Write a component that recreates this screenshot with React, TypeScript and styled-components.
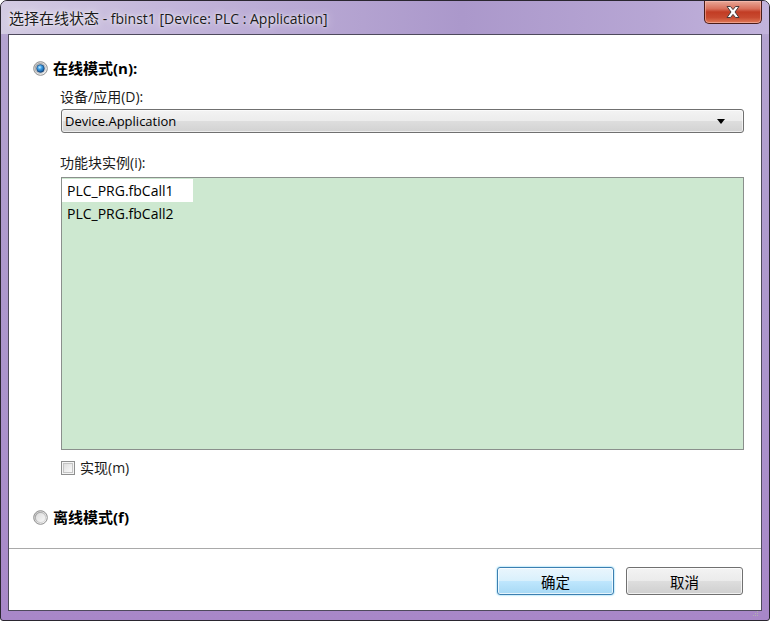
import React from "react";
import styled, { createGlobalStyle } from "styled-components";

const GlobalStyle = createGlobalStyle`
  html, body { margin: 0; padding: 0; background: #ffffff; }
  body { width: 770px; height: 621px; overflow: hidden; }
  * { box-sizing: border-box; }
`;

const UI_FONT = `"Segoe UI", "Open Sans", "Noto Sans CJK SC", sans-serif`;

const Window = styled.div`
  width: 770px;
  height: 621px;
  display: flex;
  flex-direction: column;
  border: 1px solid #2a2630;
  border-radius: 7px 7px 3px 3px;
  background: linear-gradient(180deg, #c7bbdc 0%, #b4a3d0 6%, #ab94cc 60%, #a887c8 100%);
  overflow: hidden;
  font-family: ${UI_FONT};
  color: #000;
`;

const TitleBar = styled.div`
  height: 33px;
  display: flex;
  align-items: flex-start;
  justify-content: space-between;
  padding-left: 8px;
  padding-right: 7px;
  background: linear-gradient(90deg, #d3cbe2 0%, #c4b7db 20%, #ab98cb 60%, #b7a6d4 85%, #c2b3dc 100%);
`;

const TitleText = styled.div`
  margin-top: 7px;
  font-size: 14px;
  line-height: 20px;
  color: #1a1a1a;
  white-space: nowrap;
  text-shadow: 0 0 8px rgba(255, 255, 255, 0.9), 0 0 3px rgba(255, 255, 255, 0.8);
`;

const TitleCjk = styled.span`
  font-size: 15px;
`;

const CloseButton = styled.div`
  width: 58px;
  height: 23px;
  border: 1px solid #4a1c18;
  border-top: none;
  border-radius: 0 0 5px 5px;
  background: linear-gradient(180deg, #e8a898 0%, #d8705c 35%, #c23c24 50%, #c84a30 75%, #e07a58 100%);
  box-shadow: inset 0 0 0 1px rgba(255, 200, 190, 0.5);
  display: flex;
  align-items: center;
  justify-content: center;
`;

const Client = styled.div`
  flex: 1;
  margin: 0 7px 9px 7px;
  border: 1px solid #4e4a5c;
  background: #ffffff;
  display: flex;
  flex-direction: column;
  position: relative;
`;

const Body = styled.div`
  display: flex;
  flex-direction: column;
  padding: 26px 17px 0 24px;
`;

const RadioRow = styled.div<{ $mt?: number }>`
  display: flex;
  align-items: center;
  height: 15px;
  margin-top: ${(p) => p.$mt ?? 0}px;
  gap: 5px;
`;

const RadioLabel = styled.span`
  font-size: 15px;
  font-weight: bold;
  line-height: 15px;
  color: #000;
`;

const Indented = styled.div`
  display: flex;
  flex-direction: column;
  margin-left: 28px;
`;

const FieldLabel = styled.div<{ $mt: number }>`
  font-size: 14px;
  line-height: 16px;
  height: 16px;
  margin-top: ${(p) => p.$mt}px;
  margin-left: -1px;
  color: #1a1a1a;
`;

const Combo = styled.div`
  margin-top: 4px;
  height: 24px;
  border: 1px solid #707070;
  border-radius: 3px;
  background: linear-gradient(180deg, #f3f3f3 0%, #ececec 48%, #dddddd 52%, #d2d2d2 100%);
  box-shadow: inset 0 0 0 1px rgba(255, 255, 255, 0.6);
  display: flex;
  align-items: center;
  justify-content: space-between;
  padding: 0 18px 0 3px;
  font-size: 13px;
  color: #000;
`;

const Arrow = styled.div`
  width: 0;
  height: 0;
  border-left: 4px solid transparent;
  border-right: 4px solid transparent;
  border-top: 5px solid #000;
`;

const List = styled.div`
  margin-top: 6px;
  height: 273px;
  border: 1px solid #8a8f8c;
  background: #cde8d0;
  display: flex;
  flex-direction: column;
  padding: 1px 0 0 0;
`;

const ListItem = styled.div<{ $selected?: boolean }>`
  width: 131px;
  height: 23px;
  line-height: 23px;
  padding-left: 5px;
  font-size: 14px;
  color: #000;
  white-space: nowrap;
  background: ${(p) => (p.$selected ? "#ffffff" : "transparent")};
`;

const CheckRow = styled.div`
  margin-top: 10px;
  display: flex;
  align-items: center;
  gap: 5px;
  height: 15px;
`;

const CheckBox = styled.div`
  width: 14px;
  height: 14px;
  border: 1px solid #8e8f8f;
  background: linear-gradient(135deg, #d6d6d6 0%, #f0f0f0 60%, #ffffff 100%);
  box-shadow: inset 0 0 0 1px #f4f4f4, inset 0 0 0 2px #c4c4c4;
`;

const CheckLabel = styled.span`
  font-size: 14px;
  line-height: 15px;
  color: #1a1a1a;
`;

const Footer = styled.div`
  margin-top: auto;
  height: 62px;
  border-top: 1px solid #a9a9a9;
  display: flex;
  justify-content: flex-end;
  align-items: flex-start;
  gap: 12px;
  padding: 18px 18px 0 0;
`;

const Button = styled.div<{ $primary?: boolean }>`
  width: 117px;
  height: 28px;
  border-radius: 3px;
  display: flex;
  align-items: center;
  justify-content: center;
  font-size: 14.5px;
  color: #000;
  border: 1px solid ${(p) => (p.$primary ? "#3c7fb1" : "#707070")};
  background: ${(p) =>
    p.$primary
      ? "linear-gradient(180deg, #eaf6fd 0%, #d9f0fc 48%, #bee6fd 52%, #a7d9f5 100%)"
      : "linear-gradient(180deg, #f3f3f3 0%, #ebebeb 48%, #dddddd 52%, #cfcfcf 100%)"};
  box-shadow: ${(p) =>
    p.$primary
      ? "inset 0 0 0 1px rgba(255,255,255,0.7), 0 0 2px #4cc0f0"
      : "inset 0 0 0 1px rgba(255,255,255,0.7)"};
`;

const Grip = styled.div`
  position: absolute;
  right: 2px;
  bottom: 2px;
  width: 8px;
  height: 8px;
`;

function Radio({ checked, id }: { checked: boolean; id: string }) {
  return (
    <svg width="15" height="15" viewBox="0 0 15 15">
      <defs>
        <linearGradient id={`ring-${id}`} x1="0" y1="0" x2="1" y2="1">
          <stop offset="0" stopColor="#9a9a9a" />
          <stop offset="1" stopColor="#e8e8e8" />
        </linearGradient>
        <linearGradient id={`in-${id}`} x1="0" y1="0" x2="1" y2="1">
          <stop offset="0" stopColor="#d4d4d4" />
          <stop offset="1" stopColor="#ffffff" />
        </linearGradient>
        <radialGradient id={`dot-${id}`} cx="0.4" cy="0.35" r="0.75">
          <stop offset="0" stopColor="#c8ecff" />
          <stop offset="0.35" stopColor="#3fa0e6" />
          <stop offset="0.8" stopColor="#145a9e" />
          <stop offset="1" stopColor="#0c3868" />
        </radialGradient>
      </defs>
      <circle cx="7.5" cy="7.5" r="6.8" fill={`url(#in-${id})`} stroke="#8c8c8c" strokeWidth="1" />
      <circle cx="7.5" cy="7.5" r="5.2" fill="none" stroke={`url(#ring-${id})`} strokeWidth="1.2" />
      {checked && <circle cx="7.5" cy="7.5" r="3.9" fill={`url(#dot-${id})`} stroke="#1e3e66" strokeWidth="0.6" />}
    </svg>
  );
}

export default function App() {
  return (
    <>
      <GlobalStyle />
      <Window>
        <TitleBar>
          <TitleText>
            <TitleCjk>选择在线状态</TitleCjk> - fbinst1 [Device: PLC : Application]
          </TitleText>
          <CloseButton>
            <svg width="18" height="14" viewBox="0 0 18 14">
              <path
                d="M3 1.5 L6.5 1.5 L9 4.6 L11.5 1.5 L15 1.5 L11 7 L15 12.5 L11.5 12.5 L9 9.4 L6.5 12.5 L3 12.5 L7 7 Z"
                fill="#ffffff"
                stroke="#4a3a3a"
                strokeWidth="1"
                strokeLinejoin="round"
              />
            </svg>
          </CloseButton>
        </TitleBar>
        <Client>
          <Body>
            <RadioRow>
              <Radio checked id="on" />
              <RadioLabel>在线模式(n):</RadioLabel>
            </RadioRow>
            <Indented>
              <FieldLabel $mt={13}>设备/应用(D):</FieldLabel>
              <Combo>
                <span>Device.Application</span>
                <Arrow />
              </Combo>
              <FieldLabel $mt={22}>功能块实例(i):</FieldLabel>
              <List>
                <ListItem $selected>PLC_PRG.fbCall1</ListItem>
                <ListItem>PLC_PRG.fbCall2</ListItem>
              </List>
              <CheckRow>
                <CheckBox />
                <CheckLabel>实现(m)</CheckLabel>
              </CheckRow>
            </Indented>
            <RadioRow $mt={35}>
              <Radio checked={false} id="off" />
              <RadioLabel>离线模式(f)</RadioLabel>
            </RadioRow>
          </Body>
          <Footer>
            <Button $primary>确定</Button>
            <Button>取消</Button>
          </Footer>
          <Grip>
            <svg width="8" height="8" viewBox="0 0 8 8">
              <rect x="6" y="2" width="1" height="1" fill="#b0b0b0" />
              <rect x="4" y="4" width="1" height="1" fill="#b0b0b0" />
              <rect x="6" y="4" width="1" height="1" fill="#b0b0b0" />
              <rect x="2" y="6" width="1" height="1" fill="#b0b0b0" />
              <rect x="4" y="6" width="1" height="1" fill="#b0b0b0" />
              <rect x="6" y="6" width="1" height="1" fill="#b0b0b0" />
            </svg>
          </Grip>
        </Client>
      </Window>
    </>
  );
}
